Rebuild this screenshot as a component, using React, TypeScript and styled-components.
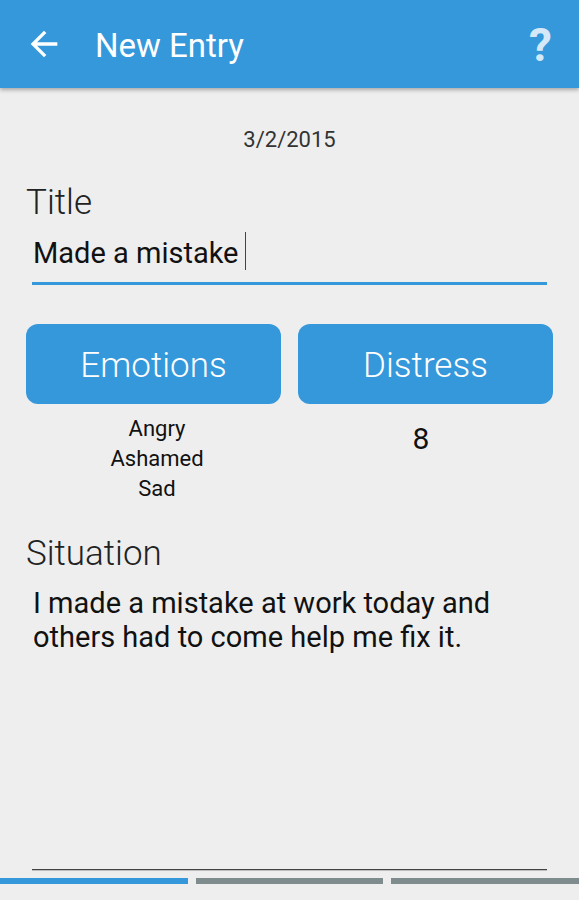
import React from 'react';
import styled, { createGlobalStyle } from 'styled-components';

const GlobalStyle = createGlobalStyle`
  html, body {
    margin: 0;
    padding: 0;
    background: #eeeeee;
  }
  body {
    font-family: Roboto, "Liberation Sans", sans-serif;
  }
`;

const BLUE = '#3498db';

const Screen = styled.div`
  display: flex;
  flex-direction: column;
  min-height: 100vh;
  background: #eeeeee;
`;

// top app bar
const AppBar = styled.header`
  position: relative;
  z-index: 1;
  display: flex;
  align-items: center;
  height: 88px;
  padding: 0 27px 0 24px;
  background: ${BLUE};
  box-shadow: 0 2px 4px rgba(0, 0, 0, 0.3);
  box-sizing: border-box;
`;

const BackButton = styled.button`
  display: flex;
  width: 40px;
  height: 40px;
  padding: 0;
  border: none;
  background: none;
  color: #ffffff;
`;

const BarTitle = styled.h1`
  flex: 1;
  margin: 0 0 0 31px;
  padding-top: 3px;
  font-size: 33px;
  font-weight: 400;
  color: #ffffff;
`;

const HelpMark = styled.span`
  padding-top: 2px;
  font-size: 46px;
  font-weight: 700;
  color: #d4e8f7;
`;

const Body = styled.main`
  display: flex;
  flex: 1;
  flex-direction: column;
  padding: 39px 26px 0;
`;

const DateLine = styled.div`
  text-align: center;
  font-size: 22px;
  line-height: 26px;
  color: #333333;
`;

const FieldLabel = styled.div<{ $top: number }>`
  margin-top: ${p => p.$top}px;
  font-size: 35px;
  font-weight: 300;
  line-height: 40px;
  color: #222222;
`;

const TitleField = styled.div`
  display: flex;
  margin: 11px 6px 0;
  padding: 0 0 10px 1px;
  border-bottom: 3px solid ${BLUE};
  font-size: 29px;
  line-height: 38px;
  color: #111111;
`;

const Caret = styled.span`
  width: 1px;
  height: 38px;
  margin: -2px 0 0 6px;
  background: #444444;
`;

const Picks = styled.div`
  display: grid;
  grid-template-columns: 1fr 1fr;
  column-gap: 17px;
  margin-top: 39px;
`;

const PickColumn = styled.div`
  display: flex;
  flex-direction: column;
  align-items: center;
`;

const PickButton = styled.button`
  width: 100%;
  height: 80px;
  padding: 3px 0 0;
  border: none;
  border-radius: 12px;
  background: ${BLUE};
  font-family: Roboto, "Liberation Sans", sans-serif;
  font-size: 35px;
  font-weight: 300;
  color: #ffffff;
`;

const EmotionList = styled.div`
  margin: 10px 0 0 7px;
  text-align: center;
  font-size: 22px;
  line-height: 30px;
  color: #111111;
`;

const Score = styled.div`
  margin: 17px 9px 0 0;
  font-size: 30px;
  line-height: 36px;
  color: #111111;
`;

const SituationField = styled.div`
  flex: 1;
  margin: 12px 6px 0;
  padding-left: 1px;
  border-bottom: 1px solid #444444;
  box-shadow: 0 1px 0 #bdbdbd;
  font-size: 29px;
  line-height: 34px;
  color: #111111;
`;

const Steps = styled.div`
  display: flex;
  gap: 8px;
  margin: 8px 0 16px;
`;

const Step = styled.div<{ $active?: boolean }>`
  flex: 1;
  height: 6px;
  background: ${p => (p.$active ? BLUE : '#7f8c8d')};
`;

const ArrowBack = () => (
  <svg width="40" height="40" viewBox="0 0 24 24" fill="currentColor">
    <path d="M20 11H7.83l5.59-5.59L12 4l-8 8 8 8 1.41-1.41L7.83 13H20v-2z" />
  </svg>
);

export default function App() {
  const emotions = ['Angry', 'Ashamed', 'Sad'];

  return (
    <>
      <GlobalStyle />
      <Screen>
        <AppBar>
          <BackButton aria-label="Back">
            <ArrowBack />
          </BackButton>
          <BarTitle>New Entry</BarTitle>
          <HelpMark>?</HelpMark>
        </AppBar>

        <Body>
          <DateLine>3/2/2015</DateLine>

          <FieldLabel $top={30}>Title</FieldLabel>
          <TitleField>
            <span>Made a mistake</span>
            <Caret />
          </TitleField>

          <Picks>
            <PickColumn>
              <PickButton>Emotions</PickButton>
              <EmotionList>
                {emotions.map(e => (
                  <div key={e}>{e}</div>
                ))}
              </EmotionList>
            </PickColumn>
            <PickColumn>
              <PickButton>Distress</PickButton>
              <Score>8</Score>
            </PickColumn>
          </Picks>

          <FieldLabel $top={30}>Situation</FieldLabel>
          <SituationField>
            I made a mistake at work today and others had to come help me fix it.
          </SituationField>
        </Body>

        <Steps>
          <Step $active />
          <Step />
          <Step />
        </Steps>
      </Screen>
    </>
  );
}
